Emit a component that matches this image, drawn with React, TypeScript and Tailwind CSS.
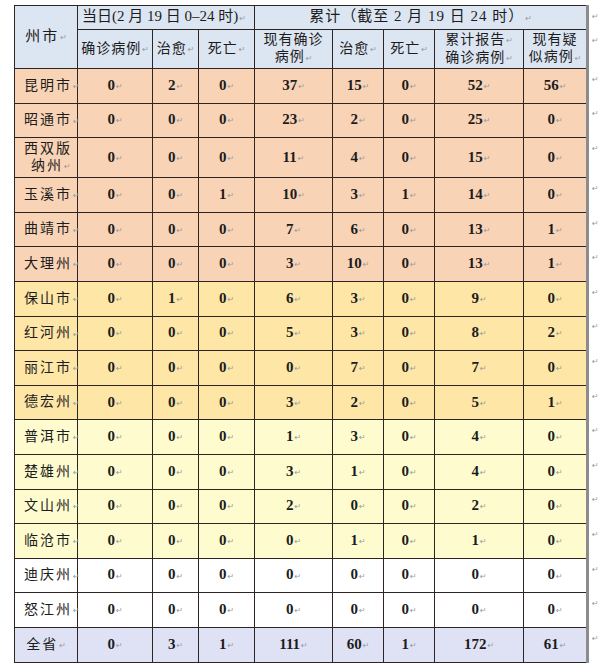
import React from 'react';

type Row = { name: string; vals: number[]; bg: string; tall?: boolean };

const peach = 'bg-[#f9d3b6]';
const amber = 'bg-[#fde6a6]';
const cream = 'bg-[#fefccf]';
const white = 'bg-white';

const rows: Row[] = [
  { name: '昆明市', vals: [0, 2, 0, 37, 15, 0, 52, 56], bg: peach },
  { name: '昭通市', vals: [0, 0, 0, 23, 2, 0, 25, 0], bg: peach },
  { name: '西双版纳州', vals: [0, 0, 0, 11, 4, 0, 15, 0], bg: peach, tall: true },
  { name: '玉溪市', vals: [0, 0, 1, 10, 3, 1, 14, 0], bg: peach },
  { name: '曲靖市', vals: [0, 0, 0, 7, 6, 0, 13, 1], bg: peach },
  { name: '大理州', vals: [0, 0, 0, 3, 10, 0, 13, 1], bg: peach },
  { name: '保山市', vals: [0, 1, 0, 6, 3, 0, 9, 0], bg: amber },
  { name: '红河州', vals: [0, 0, 0, 5, 3, 0, 8, 2], bg: amber },
  { name: '丽江市', vals: [0, 0, 0, 0, 7, 0, 7, 0], bg: amber },
  { name: '德宏州', vals: [0, 0, 0, 3, 2, 0, 5, 1], bg: amber },
  { name: '普洱市', vals: [0, 0, 0, 1, 3, 0, 4, 0], bg: cream },
  { name: '楚雄州', vals: [0, 0, 0, 3, 1, 0, 4, 0], bg: cream },
  { name: '文山州', vals: [0, 0, 0, 2, 0, 0, 2, 0], bg: cream },
  { name: '临沧市', vals: [0, 0, 0, 0, 1, 0, 1, 0], bg: cream },
  { name: '迪庆州', vals: [0, 0, 0, 0, 0, 0, 0, 0], bg: white },
  { name: '怒江州', vals: [0, 0, 0, 0, 0, 0, 0, 0], bg: white },
];

const total = [0, 3, 1, 111, 60, 1, 172, 61];

const widths = ['w-[63px]', 'w-[75px]', 'w-[46px]', 'w-[56px]', 'w-[78px]', 'w-[51px]', 'w-[51px]', 'w-[89px]', 'w-[64px]'];

// Word paragraph mark
const Mark = () => (
  <span className="text-[8px] font-normal text-[#9a9a9a] align-middle ml-[1px] tracking-normal font-['DejaVu_Sans']">↵</span>
);

const cell = 'border border-[#2e2523] text-center align-middle p-0 whitespace-nowrap leading-[17px]';
const num = `${cell} text-[15px]`;

const App: React.FC = () => {
  return (
    <div className="w-[600px] h-[671px] bg-white pt-[5px] pl-[14px] text-[#1c1c1c] font-['Liberation_Serif','Noto_Sans_CJK_SC',serif] font-bold text-[14px]">
      <div className="flex">
        <table className="w-[573px] border-collapse table-fixed border-r-[3px] border-r-[#8c8c8c]">
          <colgroup>
            {widths.map((w, i) => (
              <col key={i} className={w} />
            ))}
          </colgroup>
          <tbody>
            <tr className="bg-[#dce5f2]">
              <td rowSpan={2} className={`${cell} font-normal text-[15px] tracking-[2px]`}>
                州市<Mark />
              </td>
              <td colSpan={3} className={`${cell} h-[24px] text-left pl-[4px] font-normal text-[15px]`}>
                当日(2 月 19 日 0–24 时)<Mark />
              </td>
              <td colSpan={5} className={`${cell} h-[24px] font-normal text-[15px] tracking-[1px]`}>
                累计（截至 2 月 19 日 24 时）<Mark />
              </td>
            </tr>
            <tr className="bg-[#dce5f2]">
              <td className={`${cell} h-[39px] font-normal tracking-[1px]`}>确诊病例<Mark /></td>
              <td className={`${cell} font-normal tracking-[1px]`}>治愈<Mark /></td>
              <td className={`${cell} font-normal tracking-[1px]`}>死亡<Mark /></td>
              <td className={`${cell} font-normal tracking-[1px]`}>现有确诊<br />病例<Mark /></td>
              <td className={`${cell} font-normal tracking-[1px]`}>治愈<Mark /></td>
              <td className={`${cell} font-normal tracking-[1px]`}>死亡<Mark /></td>
              <td className={`${cell} font-normal tracking-[1px]`}>累计报告<Mark /><br />确诊病例<Mark /></td>
              <td className={`${cell} font-normal tracking-[1px]`}>现有疑<br />似病例<Mark /></td>
            </tr>
            {rows.map((r) => (
              <tr key={r.name} className={r.bg}>
                <td className={`${cell} ${r.tall ? 'h-[40px]' : 'h-[34.6px]'} text-left pl-[9px] font-normal tracking-[2px]`}>
                  {r.tall ? (
                    <>
                      西双版<br />
                      <span className="pl-[7px]">纳州</span>
                    </>
                  ) : (
                    r.name
                  )}
                  <Mark />
                </td>
                {r.vals.map((v, i) => (
                  <td key={i} className={num}>
                    {v}
                    <Mark />
                  </td>
                ))}
              </tr>
            ))}
            <tr className="bg-[#dfe2f4]">
              <td className={`${cell} h-[34.6px] font-normal tracking-[2px]`}>
                全省<Mark />
              </td>
              {total.map((v, i) => (
                <td key={i} className={num}>
                  {v}
                  <Mark />
                </td>
              ))}
            </tr>
          </tbody>
        </table>
        <div className="flex flex-col pl-[2px]">
          <div className="h-[24px]"><Mark /></div>
          <div className="h-[39px]"><Mark /></div>
          {rows.map((r) => (
            <div key={r.name} className={r.tall ? 'h-[40px]' : 'h-[34.6px]'}>
              <Mark />
            </div>
          ))}
          <div className="h-[34.6px]"><Mark /></div>
        </div>
      </div>
    </div>
  );
};

export default App;
